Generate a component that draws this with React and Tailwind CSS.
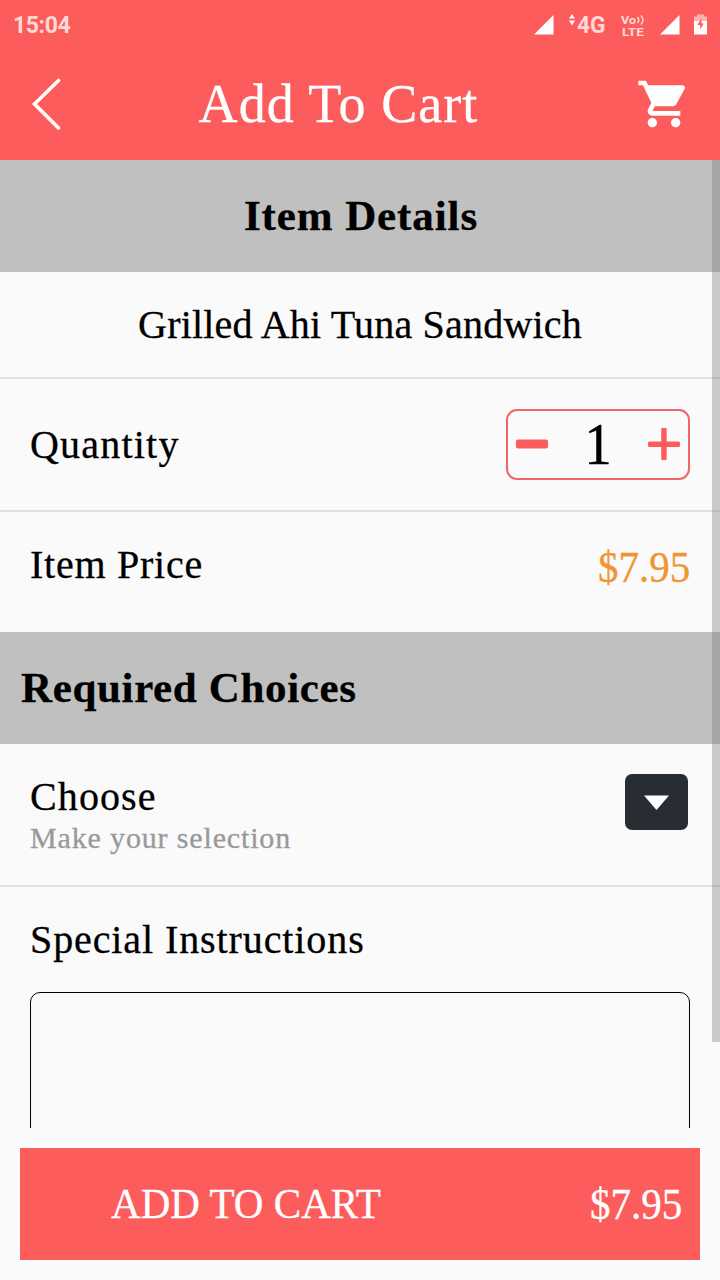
import React, { useState } from 'react';

const StatusBar = () => (
  <div className="flex h-12 items-center justify-between pl-[13px] pr-3 pt-[3px] font-['Roboto',sans-serif] text-[#ffd9d7]">
    <span className="text-[23px] font-bold leading-6 tracking-[-0.4px]">15:04</span>
    <svg width="176" height="32" viewBox="532 10 176 32" className="text-white">
      <path d="M534 34.500L553.5 15V34.500Z" fill="currentColor" />
      <path d="M569 18.500L572 14L575 18.500ZM569 20.500H575L572 25.500Z" fill="currentColor" />
      <text x="577" y="33" fontSize="24" fontWeight="700" textLength="28.500" lengthAdjust="spacingAndGlyphs" fill="#ffd9d7">4G</text>
      <text x="621" y="23.500" fontSize="10.5" fontWeight="700" textLength="15" lengthAdjust="spacingAndGlyphs" fill="#ffd9d7">Vo</text>
      <text x="622" y="35.500" fontSize="10.5" fontWeight="700" textLength="22" lengthAdjust="spacingAndGlyphs" fill="#ffd9d7">LTE</text>
      <path d="M637.500 17Q640 20 637.500 23M641 15.500Q645 20 641 24.500" fill="none" stroke="#ffd9d7" strokeWidth="1.500" />
      <path d="M660 34.500L679.500 15V34.500Z" fill="currentColor" />
      <path d="M697 14.500H704V16.500H707V22H694V16.500H697Z" fill="#ffb3b1" />
      <path d="M694 21H707V34.500H694Z" fill="currentColor" />
      <path d="M701.500 18L697.500 25H700.200V29.500L703.700 23.500H701.500Z" fill="#fd5c5c" />
    </svg>
  </div>
);

const Header = () => (
  <div className="flex h-28 items-center justify-between pl-8 pr-7">
    <button aria-label="Back">
      <svg width="32" height="56" viewBox="0 0 32 56" fill="none" stroke="white" strokeWidth="3.600" strokeLinecap="round">
        <path d="M26.500 4.500L2.500 28L26.500 52" />
      </svg>
    </button>
    <h1 className="pr-[23px] text-[54px] leading-[60px] tracking-[1.05px] text-white [-webkit-text-stroke:0.3px]">Add To Cart</h1>
    <button aria-label="Cart">
      <svg width="56" height="56" viewBox="0 0 24 24" fill="white">
        <path d="M7 18c-1.100 0-1.990.9-1.990 2S5.900 22 7 22s2-.9 2-2-.9-2-2-2zM1 2v2h2l3.600 7.590-1.350 2.450c-.16.280-.25.610-.25.960 0 1.100.9 2 2 2h12v-2H7.420c-.14 0-.25-.11-.25-.25l.03-.12.900-1.630h7.450c.75 0 1.410-.41 1.750-1.030l3.580-6.490c.08-.14.120-.31.120-.48 0-.55-.45-1-1-1H5.210l-.94-2H1zm16 16c-1.100 0-1.990.9-1.990 2s.890 2 1.990 2 2-.9 2-2-.9-2-2-2z" />
      </svg>
    </button>
  </div>
);

const QuantityPicker = ({ value, onChange }) => (
  <div className="mb-px flex h-[71px] w-[184px] items-center justify-between rounded-[11px] border-2 border-[#ef6669] px-2">
    <button aria-label="Decrease" onClick={() => onChange(Math.max(1, value - 1))}>
      <svg width="32" height="32" viewBox="0 0 32 32">
        <rect y="11.500" width="32" height="9" rx="2" fill="#fd5c5c" />
      </svg>
    </button>
    <span className="inline-block scale-x-90 text-[60px] leading-[60px] [-webkit-text-stroke:0.6px]">{value}</span>
    <button aria-label="Increase" onClick={() => onChange(value + 1)}>
      <svg width="32" height="32" viewBox="0 0 32 32" fill="#fd5c5c">
        <rect y="13.500" width="32" height="5.500" rx="1.500" />
        <rect x="13.200" width="5.500" height="32" rx="1" />
      </svg>
    </button>
  </div>
);

const App = () => {
  const [quantity, setQuantity] = useState(1);
  const price = `$${(7.95 * quantity).toFixed(2)}`;

  return (
    <div className="flex h-[1280px] w-[720px] flex-col overflow-hidden bg-[#fafafa] font-['Liberation_Serif',serif] text-[40px] leading-[48px] text-black">
      <header className="h-40 shrink-0 bg-[#fd5c5c]">
        <StatusBar />
        <Header />
      </header>

      <main className="relative h-[968px] shrink-0 overflow-hidden [-webkit-text-stroke:0.3px]">
        <h2 className="flex h-28 items-center justify-center bg-[#c0c0c0] pl-0.5 text-[43px] font-bold tracking-[0.9px]">
          Item Details
        </h2>
        <div className="flex h-[107px] items-center justify-center border-b-2 border-[#e0e0e0] tracking-[0.2px]">
          Grilled Ahi Tuna Sandwich
        </div>
        <div className="flex h-[133px] items-center justify-between border-b-2 border-[#e0e0e0] px-[30px]">
          <span className="tracking-[1.2px]">Quantity</span>
          <QuantityPicker value={quantity} onChange={setQuantity} />
        </div>
        <div className="flex h-[120px] items-center justify-between px-[30px]">
          <span className="pb-3.5 tracking-[0.75px]">Item Price</span>
          <span className="origin-right scale-x-[0.91] pb-2.5 text-[45px] text-[#f19434]">{price}</span>
        </div>
        <h2 className="flex h-28 items-center bg-[#c0c0c0] px-[21px] text-[43px] font-bold tracking-[0.65px]">
          Required Choices
        </h2>
        <div className="flex h-[143px] justify-between border-b-2 border-[#e0e0e0] pl-[30px] pr-8 pt-[30px]">
          <div>
            <div className="leading-[46px] tracking-[1.1px]">Choose</div>
            <div className="text-[30px] leading-[35px] tracking-[0.85px] text-[#999]">Make your selection</div>
          </div>
          <button aria-label="Choose" className="flex h-14 w-[63px] items-center justify-center rounded-[7px] bg-[#272d33]">
            <svg width="25" height="16" viewBox="0 0 25 16" className="mt-0.5">
              <path d="M0 0.500H25L12.500 15Z" fill="white" />
            </svg>
          </button>
        </div>
        <div className="px-[30px] pt-[29px]">
          <label htmlFor="instructions" className="block tracking-[0.9px]">Special Instructions</label>
          <textarea
            id="instructions"
            className="mt-7 block h-[200px] w-full resize-none rounded-[10px] border border-black bg-transparent p-4 outline-none"
          />
        </div>
        {/* scroll indicator */}
        <div className="absolute right-0 top-0 h-[882px] w-2 bg-[#7f7f7f]/40" />
      </main>

      <footer className="px-5 pt-5">
        <button className="flex h-28 w-full items-center justify-between bg-[#fd5c5c] pl-[91px] pr-[18px] text-white [-webkit-text-stroke:0.3px]">
          <span className="origin-left scale-x-[0.955] text-[43px]">ADD TO CART</span>
          <span className="origin-right scale-x-[0.91] text-[45px]">{price}</span>
        </button>
      </footer>
    </div>
  );
};

export default App;
